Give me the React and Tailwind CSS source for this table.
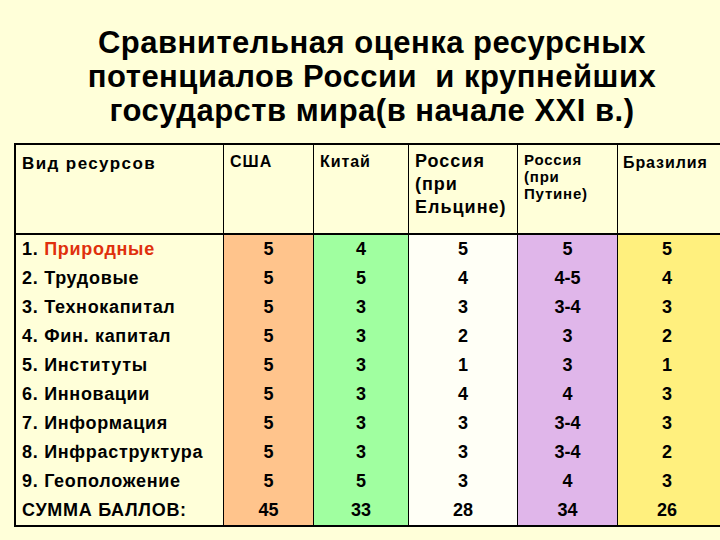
import React from "react";

const rows = [
  ["1. ", "Природные", "5", "4", "5", "5", "5"],
  ["2. ", "Трудовые", "5", "5", "4", "4-5", "4"],
  ["3. ", "Технокапитал", "5", "3", "3", "3-4", "3"],
  ["4. ", "Фин. капитал", "5", "3", "2", "3", "2"],
  ["5. ", "Институты", "5", "3", "1", "3", "1"],
  ["6. ", "Инновации", "5", "3", "4", "4", "3"],
  ["7. ", "Информация", "5", "3", "3", "3-4", "3"],
  ["8. ", "Инфраструктура", "5", "3", "3", "3-4", "2"],
  ["9. ", "Геоположение", "5", "5", "3", "4", "3"],
  ["", "СУММА БАЛЛОВ:", "45", "33", "28", "34", "26"],
];

const colBg = ["bg-[#ffc48c]", "bg-[#a0ffa0]", "bg-[#fffff6]", "bg-[#e0b6ea]", "bg-[#fff07e]"];

export default function App() {
  return (
    <div
      className="h-[540px] w-[720px] overflow-hidden bg-[#ffffd9] text-black"
      style={{ fontFamily: '"Liberation Sans", Arial, sans-serif' }}
    >
      <div className="pt-[26px] pl-6 text-center text-[31px] font-bold leading-[34px] tracking-[0.5px]">
        <p>Сравнительная оценка ресурсных</p>
        <p>потенциалов России&nbsp; и крупнейших</p>
        <p>государств мира(в начале XXI в.)</p>
      </div>

      <div className="ml-[14px] mt-[15px] w-[706px] border-2 border-r-0 border-black font-bold">
        <div className="grid h-[90px] grid-cols-[207px_90px_95px_109px_100px_105px] border-b-2 border-black">
          <div className="pl-[6px] pt-[6px] text-[17px] tracking-[1.4px]">Вид ресурсов</div>
          <div className="border-l border-black pl-[6px] pt-[5px] text-[16px] tracking-[1px]">США</div>
          <div className="border-l border-black pl-[6px] pt-[5px] text-[16px] tracking-[0.9px]">Китай</div>
          <div className="border-l border-black pl-[6px] pt-[5px] text-[18px] leading-[23px] tracking-[1px]">
            Россия
            <br />
            (при
            <br />
            Ельцине)
          </div>
          <div className="border-l border-black pl-[6px] pt-[6px] text-[15px] leading-[17px] tracking-[0.8px]">
            Россия
            <br />
            (при
            <br />
            Путине)
          </div>
          <div className="border-l border-black pl-[5px] pt-[6px] text-[16px] tracking-[0.9px]">Бразилия</div>
        </div>

        <div className="grid grid-cols-[207px_90px_95px_109px_100px_105px]">
          <div className="flex flex-col">
            {rows.map((r, i) => (
              <div key={i} className="h-[29px] whitespace-pre pl-[6px] text-[18px] leading-[29px] tracking-[0.7px]">
                {r[0]}
                <span className={i === 0 ? "text-[#e0300c]" : ""}>{r[1]}</span>
              </div>
            ))}
          </div>
          {colBg.map((bg, c) => (
            <div key={c} className={`flex flex-col border-l border-black ${bg}`}>
              {rows.map((r, i) => (
                <div key={i} className={`h-[29px] text-center text-[18px] leading-[29px] ${c === 4 ? "pr-[6px]" : ""}`}>
                  {r[c + 2]}
                </div>
              ))}
            </div>
          ))}
        </div>
      </div>
    </div>
  );
}
